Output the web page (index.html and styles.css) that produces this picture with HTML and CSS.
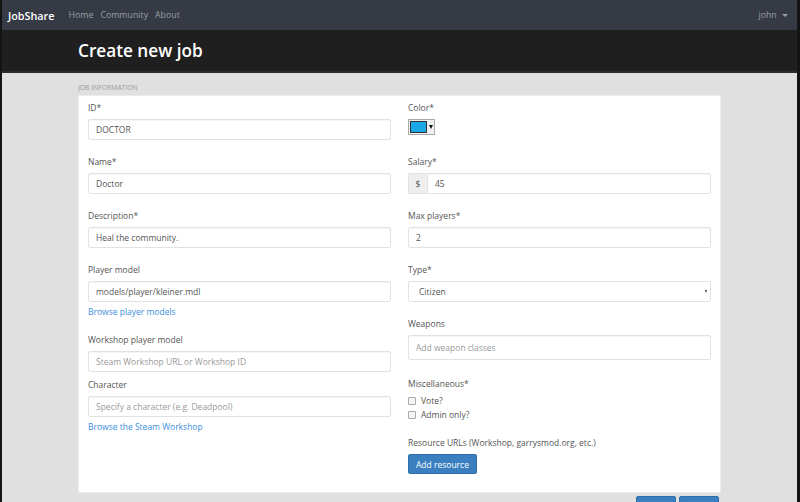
FILE: index.html
```html
<!DOCTYPE html>
<html lang="en">
<head>
<meta charset="utf-8">
<title>JobShare - Create new job</title>
<link rel="stylesheet" href="styles.css">
</head>
<body>
<nav class="navbar">
  <a class="brand" href="#">JobShare</a>
  <ul class="nav-links">
    <li><a href="#">Home</a></li>
    <li><a href="#">Community</a></li>
    <li><a href="#">About</a></li>
  </ul>
  <a class="user" href="#">john <span class="caret"></span></a>
</nav>
<header class="jumbo">
  <div class="container"><h1>Create new job</h1></div>
</header>
<main class="content">
  <div class="container">
    <div class="section-title">JOB INFORMATION</div>
    <form class="card">
      <div class="col">
        <div class="group">
          <label>ID*</label>
          <input class="control" type="text" value="DOCTOR">
        </div>
        <div class="group">
          <label>Name*</label>
          <input class="control" type="text" value="Doctor">
        </div>
        <div class="group">
          <label>Description*</label>
          <input class="control" type="text" value="Heal the community.">
        </div>
        <div class="group">
          <label>Player model</label>
          <input class="control" type="text" value="models/player/kleiner.mdl">
          <a class="help-link" href="#">Browse player models</a>
        </div>
        <div class="group tight">
          <label>Workshop player model</label>
          <input class="control" type="text" placeholder="Steam Workshop URL or Workshop ID">
        </div>
        <div class="group">
          <label>Character</label>
          <input class="control" type="text" placeholder="Specify a character (e.g. Deadpool)">
          <a class="help-link" href="#">Browse the Steam Workshop</a>
        </div>
      </div>
      <div class="col">
        <div class="group">
          <label>Color*</label>
          <div class="color-picker"><span class="swatch"></span><span class="tri"></span></div>
        </div>
        <div class="group">
          <label>Salary*</label>
          <div class="input-group">
            <span class="addon">$</span>
            <input class="control" type="text" value="45">
          </div>
        </div>
        <div class="group">
          <label>Max players*</label>
          <input class="control" type="text" value="2">
        </div>
        <div class="group">
          <label>Type*</label>
          <div class="select"><span>Citizen</span><span class="sel-tri"></span></div>
        </div>
        <div class="group weapons">
          <label>Weapons</label>
          <input class="control tall" type="text" placeholder="Add weapon classes">
        </div>
        <div class="group checks">
          <label>Miscellaneous*</label>
          <div class="check"><span class="box"></span>Vote?</div>
          <div class="check"><span class="box"></span>Admin only?</div>
        </div>
        <div class="group">
          <label>Resource URLs (Workshop, garrysmod.org, etc.)</label>
          <button type="button" class="btn">Add resource</button>
        </div>
      </div>
    </form>
    <div class="actions">
      <button type="button" class="btn wide">Cancel</button>
      <button type="button" class="btn wide">Submit</button>
    </div>
  </div>
</main>
</body>
</html>
```
FILE: styles.css
```css
html {
  background: #141414;
}
body {
  margin: 0 3px 0 2px;
  font-family: "Open Sans", "Noto Sans", sans-serif;
  font-size: 8.5px;
  color: #555;
  background: #e0e0e0;
  min-height: 502px;
}
a { text-decoration: none; }
.navbar {
  height: 30px;
  background: #353a44;
  display: flex;
  align-items: center;
  padding: 0 9px 0 6px;
}
.brand {
  color: #fff;
  font-size: 10.8px;
  font-weight: 600;
  margin-right: 14px;
}
.nav-links {
  list-style: none;
  display: flex;
  gap: 7px;
  margin: 0;
  padding: 0;
  flex: 1;
}
.nav-links a, .user {
  color: #9b9ea3;
  font-size: 8.8px;
}
.caret {
  display: inline-block;
  width: 0; height: 0;
  border-left: 3px solid transparent;
  border-right: 3px solid transparent;
  border-top: 3px solid #9b9ea3;
  vertical-align: middle;
  margin-left: 3px;
}
.jumbo {
  background: #1f1f1f;
  height: 41px;
  border-bottom: 2px solid #2b2b2b;
}
.container {
  width: 643px;
  margin: 0 auto;
}
.jumbo h1 {
  margin: 0;
  color: #fff;
  font-size: 17.2px;
  font-weight: 600;
  line-height: 41px;
}
.section-title {
  font-size: 6.8px;
  color: #9a9a9a;
  padding: 10px 0 3px;
  line-height: 9px;
}
.card {
  background: #fff;
  display: grid;
  grid-template-columns: 1fr 1fr;
  column-gap: 17px;
  padding: 6px 9px 18px;
  border: 1px solid #ececec;
  height: 398px;
  box-sizing: border-box;
}
.col {
  display: flex;
  flex-direction: column;
}
.group {
  display: flex;
  flex-direction: column;
  margin-bottom: 16px;
}
.group.tight { margin-bottom: 7px; }
.group.weapons { margin-bottom: 18px; }
label {
  color: #555;
  line-height: 12px;
  margin-bottom: 5px;
}
.control {
  font: inherit;
  color: #555;
  height: 21px;
  box-sizing: border-box;
  border: 1px solid #e2e2e2;
  border-radius: 2px;
  padding: 0 7px;
  box-shadow: inset 0 1px 1px rgba(0,0,0,0.04);
  background: #fff;
  width: 100%;
}
.control.tall { height: 25px; }
.control::placeholder { color: #9a9a9a; }
.help-link {
  color: #3b8ee0;
  line-height: 12px;
  margin-top: 4px;
}
.color-picker {
  display: flex;
  align-items: center;
  gap: 2px;
  width: 27px;
  height: 16px;
  box-sizing: border-box;
  border: 1px solid #aaa;
  background: #f0f0f0;
  padding: 1px;
  margin-bottom: 5px;
}
.swatch {
  width: 15px;
  height: 10px;
  background: #1ba7e6;
  border: 1px solid #333;
}
.tri {
  width: 0; height: 0;
  border-left: 2.5px solid transparent;
  border-right: 2.5px solid transparent;
  border-top: 4px solid #111;
}
.input-group {
  display: flex;
}
.addon {
  width: 19px;
  height: 21px;
  box-sizing: border-box;
  background: #eee;
  border: 1px solid #e2e2e2;
  border-right: 0;
  border-radius: 2px 0 0 2px;
  display: flex;
  align-items: center;
  justify-content: center;
  flex: none;
}
.input-group .control {
  border-radius: 0 2px 2px 0;
}
.select {
  height: 21px;
  box-sizing: border-box;
  border: 1px solid #e2e2e2;
  border-radius: 2px;
  padding: 0 3px 0 10px;
  display: flex;
  align-items: center;
  justify-content: space-between;
  color: #555;
}
.sel-tri {
  width: 0; height: 0;
  border-left: 1.5px solid transparent;
  border-right: 1.5px solid transparent;
  border-top: 3px solid #333;
}
.check {
  display: flex;
  align-items: center;
  line-height: 14px;
  color: #555;
}
.box {
  width: 6px;
  height: 6px;
  border: 1px solid #aaa;
  background: #f4f4f4;
  border-radius: 1px;
  margin-right: 5px;
}
.group.checks { margin-bottom: 15px; }
.group.checks label { margin-bottom: 4px; }
.btn {
  font: inherit;
  color: #fff;
  background: #3a7fc0;
  border: 1px solid #2f6ea8;
  border-radius: 2px;
  height: 20px;
  padding: 0 7px;
  align-self: flex-start;
}
.actions {
  display: flex;
  justify-content: flex-end;
  gap: 3px;
  padding: 3px 2px 0 0;
}
.btn.wide {
  width: 40px;
  height: 26px;
}
```
